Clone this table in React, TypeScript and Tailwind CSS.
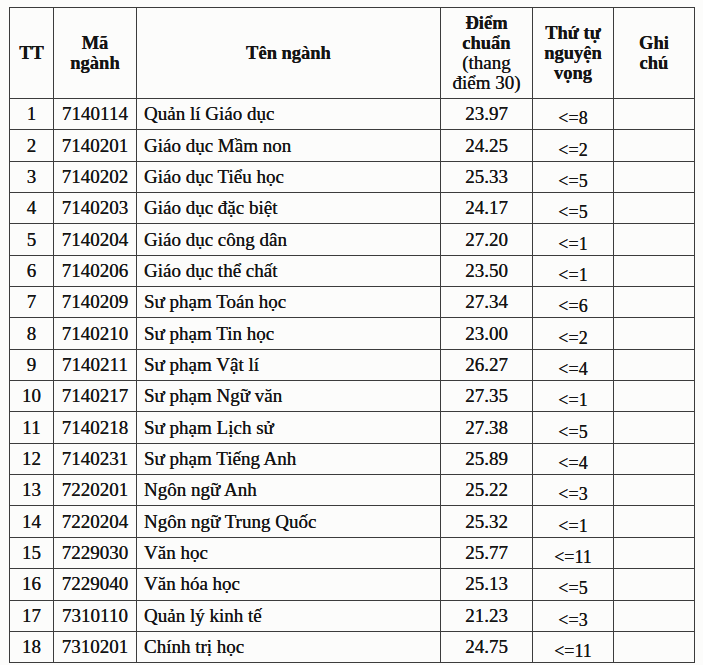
import React from "react";

const rows: [string, string, string, string, string][] = [
  ["1", "7140114", "Quản lí Giáo dục", "23.97", "<=8"],
  ["2", "7140201", "Giáo dục Mầm non", "24.25", "<=2"],
  ["3", "7140202", "Giáo dục Tiểu học", "25.33", "<=5"],
  ["4", "7140203", "Giáo dục đặc biệt", "24.17", "<=5"],
  ["5", "7140204", "Giáo dục công dân", "27.20", "<=1"],
  ["6", "7140206", "Giáo dục thể chất", "23.50", "<=1"],
  ["7", "7140209", "Sư phạm Toán học", "27.34", "<=6"],
  ["8", "7140210", "Sư phạm Tin học", "23.00", "<=2"],
  ["9", "7140211", "Sư phạm Vật lí", "26.27", "<=4"],
  ["10", "7140217", "Sư phạm Ngữ văn", "27.35", "<=1"],
  ["11", "7140218", "Sư phạm Lịch sử", "27.38", "<=5"],
  ["12", "7140231", "Sư phạm Tiếng Anh", "25.89", "<=4"],
  ["13", "7220201", "Ngôn ngữ Anh", "25.22", "<=3"],
  ["14", "7220204", "Ngôn ngữ Trung Quốc", "25.32", "<=1"],
  ["15", "7229030", "Văn học", "25.77", "<=11"],
  ["16", "7229040", "Văn hóa học", "25.13", "<=5"],
  ["17", "7310110", "Quản lý kinh tế", "21.23", "<=3"],
  ["18", "7310201", "Chính trị học", "24.75", "<=11"],
];

export default function App() {
  return (
    <div className="w-[703px] h-[665px] bg-[#fcfcfb] pt-[7px] pl-[9px] overflow-hidden text-[#141414] [text-shadow:0_0_0.5px_#222] [font-family:'Liberation_Serif','Times_New_Roman',serif]">
      <table className="border-collapse table-fixed w-[685px]">
        <colgroup>
          <col className="w-[44px]" />
          <col className="w-[83px]" />
          <col className="w-[304px]" />
          <col className="w-[92px]" />
          <col className="w-[81px]" />
          <col className="w-[81px]" />
        </colgroup>
        <thead>
          <tr className="h-[91px] text-[18.5px] leading-[20px]">
            <th className="border border-[#3c3c3c] font-bold align-middle">TT</th>
            <th className="border border-[#3c3c3c] font-bold align-middle">
              Mã
              <br />
              ngành
            </th>
            <th className="border border-[#3c3c3c] font-bold align-middle">Tên ngành</th>
            <th className="border border-[#3c3c3c] align-middle">
              <span className="font-bold">Điểm</span>
              <br />
              <span className="font-bold">chuẩn</span>
              <br />
              <span className="font-normal text-[19px]">(thang</span>
              <br />
              <span className="font-normal text-[19px]">điểm 30)</span>
            </th>
            <th className="border border-[#3c3c3c] font-bold align-middle">
              Thứ tự
              <br />
              nguyện
              <br />
              vọng
            </th>
            <th className="border border-[#3c3c3c] font-bold align-middle">
              Ghi
              <br />
              chú
            </th>
          </tr>
        </thead>
        <tbody className="text-[19px] leading-[22px]">
          {rows.map((r) => (
            <tr key={r[0]} className="h-[31.35px]">
              <td className="border border-[#3c3c3c] text-center align-middle p-0">{r[0]}</td>
              <td className="border border-[#3c3c3c] text-center align-middle p-0">{r[1]}</td>
              <td className="border border-[#3c3c3c] text-left align-middle pl-[7px] p-0">{r[2]}</td>
              <td className="border border-[#3c3c3c] text-center align-middle p-0">{r[3]}</td>
              <td className="border border-[#3c3c3c] text-center align-middle p-0">
                <span className="relative top-[4px] text-[18px]">{r[4]}</span>
              </td>
              <td className="border border-[#3c3c3c] p-0"></td>
            </tr>
          ))}
        </tbody>
      </table>
    </div>
  );
}
